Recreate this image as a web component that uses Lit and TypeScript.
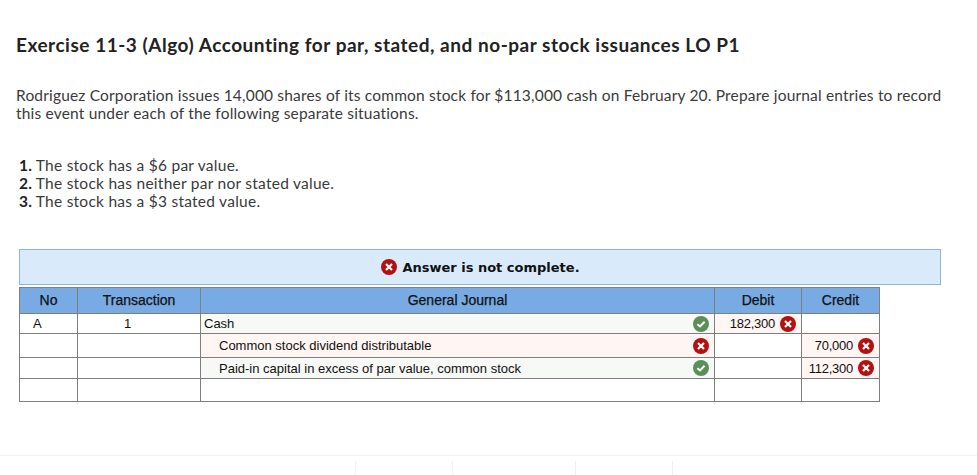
import { LitElement, html, css } from "lit";

type Mark = "ok" | "bad" | "";

interface Row {
  no: string;
  tx: string;
  account: string;
  indent: boolean;
  mark: Mark;
  debit: string;
  debitMark: Mark;
  credit: string;
  creditMark: Mark;
  height: number;
}

const rows: Row[] = [
  { no: "A", tx: "1", account: "Cash", indent: false, mark: "ok", debit: "182,300", debitMark: "bad", credit: "", creditMark: "", height: 20 },
  { no: "", tx: "", account: "Common stock dividend distributable", indent: true, mark: "bad", debit: "", debitMark: "", credit: "70,000", creditMark: "bad", height: 24 },
  { no: "", tx: "", account: "Paid-in capital in excess of par value, common stock", indent: true, mark: "ok", debit: "", debitMark: "", credit: "112,300", creditMark: "bad", height: 21 },
  { no: "", tx: "", account: "", indent: false, mark: "", debit: "", debitMark: "", credit: "", creditMark: "", height: 23 },
];

function icon(mark: Mark) {
  if (!mark) return "";
  if (mark === "ok") {
    return html`<svg class="icon" viewBox="0 0 16 16">
      <circle cx="8" cy="8" r="8" fill="#5c8f58"></circle>
      <path d="M4.4 8.2 7 10.4 11.6 5.8" fill="none" stroke="#fff" stroke-width="2"></path>
    </svg>`;
  }
  return html`<svg class="icon" viewBox="0 0 16 16">
    <circle cx="8" cy="8" r="8" fill="#b51010"></circle>
    <path d="M5 5 11 11M11 5 5 11" fill="none" stroke="#fff" stroke-width="2.2"></path>
  </svg>`;
}

export class AppRoot extends LitElement {
  static styles = css`
    :host {
      display: block;
      width: 977px;
      height: 475px;
      overflow: hidden;
      background: #fff;
      font-family: "Lato", "Liberation Sans", sans-serif;
      color: #3a3a3a;
    }
    .content {
      padding: 33px 30px 0 16px;
      box-sizing: border-box;
      height: 455px;
    }
    h1 {
      margin: 0;
      font-size: 19px;
      line-height: 24px;
      font-weight: 700;
      color: #222;
      letter-spacing: 0.52px;
    }
    .intro {
      margin: 29px 0 0;
      font-size: 15.5px;
      line-height: 18px;
      letter-spacing: 0.18px;
    }
    ol {
      list-style: none;
      margin: 34px 0 0;
      padding: 0 0 0 3px;
      font-size: 15.5px;
      line-height: 18px;
      letter-spacing: 0.26px;
    }
    ol b {
      display: inline-block;
      width: 13px;
      text-align: right;
      color: #222;
    }
    .banner {
      box-sizing: border-box;
      margin: 39px 0 2px 3px;
      width: 922px;
      height: 36px;
      display: flex;
      align-items: center;
      justify-content: center;
      gap: 5px;
      padding-left: 1px;
      background: #d9ebfa;
      border: 1px solid #8db5e2;
      font-family: "DejaVu Sans", Verdana, sans-serif;
      font-size: 13px;
      font-weight: 700;
      color: #111;
    }
    table {
      margin-left: 3px;
      width: 860px;
      table-layout: fixed;
      border-collapse: collapse;
      font-family: "Liberation Sans", Arial, sans-serif;
      font-size: 13px;
      color: #111;
    }
    th,
    td {
      border: 1px solid #7f7f7f;
      padding: 0;
    }
    th {
      height: 26px;
      padding-bottom: 1px;
      box-sizing: border-box;
      background: #78aae4;
      font-size: 14px;
      font-weight: 400;
      -webkit-text-stroke: 0.25px #111;
    }
    td {
      background: #fff;
    }
    .no {
      padding-left: 13px;
    }
    .tx {
      text-align: center;
      padding-right: 23px;
      box-sizing: border-box;
    }
    td.green {
      background: #f6f9f5;
    }
    td.red {
      background: #fff5f3;
    }
    .account {
      display: flex;
      align-items: center;
      justify-content: space-between;
      padding: 0 5px 0 3px;
    }
    .account.indent {
      padding-left: 18px;
    }
    .amount {
      display: flex;
      align-items: center;
      justify-content: flex-end;
      gap: 5px;
      padding-right: 5px;
      letter-spacing: -0.25px;
    }
    .icon {
      width: 16px;
      height: 16px;
      flex: none;
      display: block;
    }
    footer {
      box-sizing: border-box;
      height: 20px;
      border-top: 1px solid #f1f1f1;
      padding: 5px 0 0 355px;
      display: flex;
    }
    footer span {
      box-sizing: border-box;
      height: 100%;
      border-left: 1px solid #f1f1f1;
    }
    footer span:nth-child(1) { width: 97px; }
    footer span:nth-child(2) { width: 123px; }
    footer span:nth-child(3) { width: 97px; }
  `;

  private tint(mark: Mark) {
    return mark === "ok" ? "green" : mark === "bad" ? "red" : "";
  }

  render() {
    return html`
      <div class="content">
        <h1>Exercise 11-3 (Algo) Accounting for par, stated, and no-par stock issuances LO P1</h1>
        <p class="intro">
          Rodriguez Corporation issues 14,000 shares of its common stock for $113,000 cash on February 20. Prepare journal entries to record
          this event under each of the following separate situations.
        </p>
        <ol>
          <li><b>1.</b> The stock has a $6 par value.</li>
          <li><b>2.</b> The stock has neither par nor stated value.</li>
          <li><b>3.</b> The stock has a $3 stated value.</li>
        </ol>
        <div class="banner">${icon("bad")}<span>Answer is not complete.</span></div>
        <table>
          <colgroup>
            <col style="width:58px" />
            <col style="width:123px" />
            <col style="width:514px" />
            <col style="width:87px" />
            <col style="width:78px" />
          </colgroup>
          <thead>
            <tr>
              <th>No</th>
              <th>Transaction</th>
              <th>General Journal</th>
              <th>Debit</th>
              <th>Credit</th>
            </tr>
          </thead>
          <tbody>
            ${rows.map(
              (r) => html`
                <tr style="height:${r.height}px">
                  <td class="no">${r.no}</td>
                  <td class="tx">${r.tx}</td>
                  <td class=${this.tint(r.mark)}>
                    <div class="account ${r.indent ? "indent" : ""}">
                      <span>${r.account}</span>${icon(r.mark)}
                    </div>
                  </td>
                  <td class=${this.tint(r.debitMark)}>
                    <div class="amount"><span>${r.debit}</span>${icon(r.debitMark)}</div>
                  </td>
                  <td class=${this.tint(r.creditMark)}>
                    <div class="amount"><span>${r.credit}</span>${icon(r.creditMark)}</div>
                  </td>
                </tr>
              `
            )}
          </tbody>
        </table>
      </div>
      <footer><span></span><span></span><span></span><span></span></footer>
    `;
  }
}
customElements.define("app-root", AppRoot);
